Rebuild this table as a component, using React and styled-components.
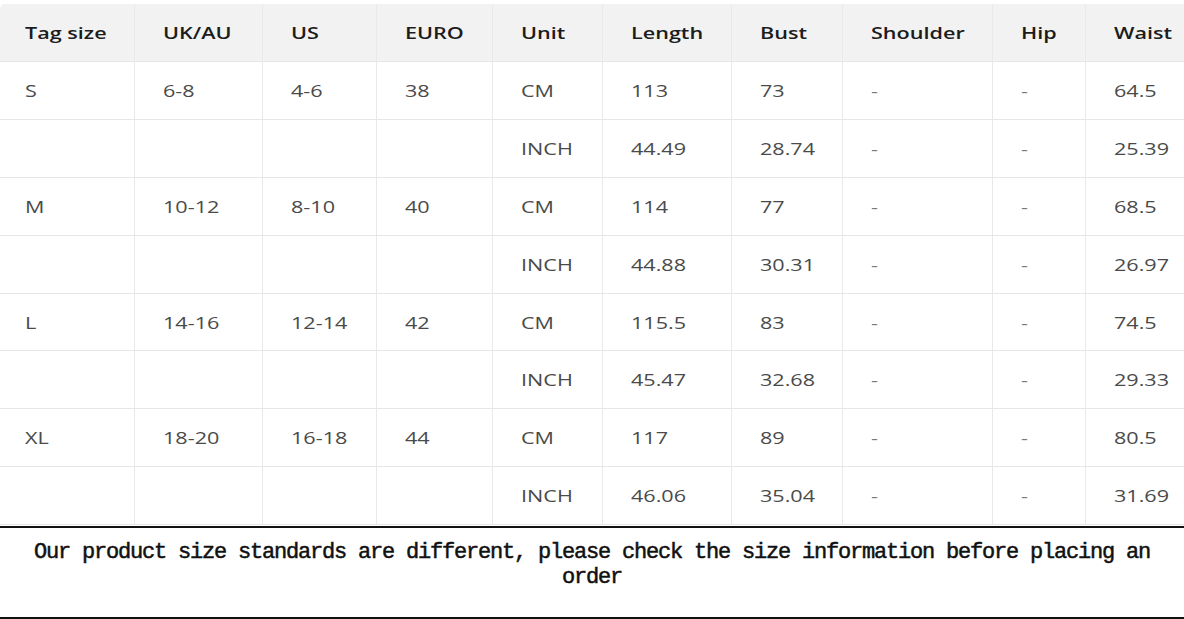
import React from 'react';
import styled, { createGlobalStyle } from 'styled-components';

const GlobalStyle = createGlobalStyle`
html, body {
  margin: 0;
  padding: 0;
  background: #ffffff;
  overflow: hidden;
}
`

const Page = styled.div`
width: 1184px;
height: 619px;
display: flex;
flex-direction: column;
padding-top: 4px;
box-sizing: border-box;
overflow: hidden;
`

const Table = styled.div`
display: grid;
grid-template-columns: 135px 128px 114px 116px 110px 129px 111px 150px 93px 130px;
grid-template-rows: 58px repeat(8, 57.9px);
width: 1216px;
border-top-left-radius: 5px;
overflow: hidden;
font-family: "Open Sans", "Noto Sans", sans-serif;
`

const Cell = styled.div`
display: flex;
align-items: center;
box-sizing: border-box;
padding-left: ${p => (p.$first ? '25px' : '28px')};
border-right: 1px solid #e9e9e9;
border-bottom: 1px solid #e6e6e6;
background: ${p => (p.$head ? '#f2f2f2' : '#ffffff')};
color: ${p => (p.$head ? '#1c1c1c' : p.$dash ? '#7a7a7a' : '#4a4a4a')};
font-size: 17px;
font-weight: ${p => (p.$head ? 600 : 400)};
white-space: nowrap;
`

const Label = styled.span`
display: inline-block;
transform: scaleX(1.27);
transform-origin: left center;
`

const Caption = styled.div`
height: 93px;
margin-top: 1px;
box-sizing: border-box;
border-top: 2px solid #111111;
border-bottom: 2px solid #111111;
padding: 12px 30px 0;
text-align: center;
font-family: "Liberation Mono", "DejaVu Sans Mono", monospace;
font-size: 22px;
font-weight: 400;
-webkit-text-stroke: 0.5px #111111;
letter-spacing: -1.2px;
line-height: 25px;
color: #111111;
`

const headers = ['Tag size', 'UK/AU', 'US', 'EURO', 'Unit', 'Length', 'Bust', 'Shoulder', 'Hip', 'Waist'];

const sizes = [
    { tag: 'S', uk: '6-8', us: '4-6', eu: '38', cm: ['113', '73', '64.5'], inch: ['44.49', '28.74', '25.39'] },
    { tag: 'M', uk: '10-12', us: '8-10', eu: '40', cm: ['114', '77', '68.5'], inch: ['44.88', '30.31', '26.97'] },
    { tag: 'L', uk: '14-16', us: '12-14', eu: '42', cm: ['115.5', '83', '74.5'], inch: ['45.47', '32.68', '29.33'] },
    { tag: 'XL', uk: '18-20', us: '16-18', eu: '44', cm: ['117', '89', '80.5'], inch: ['46.06', '35.04', '31.69'] },
];

function rowsFor(s) {
    return [
        [s.tag, s.uk, s.us, s.eu, 'CM', s.cm[0], s.cm[1], '-', '-', s.cm[2]],
        ['', '', '', '', 'INCH', s.inch[0], s.inch[1], '-', '-', s.inch[2]],
    ];
}

function App() {
    const rows = sizes.flatMap(rowsFor);

    return (
        <Page>
            <GlobalStyle />
            <Table>
                {headers.map((h, i) => (
                    <Cell key={h} $head $first={i === 0}>
                        <Label>{h}</Label>
                    </Cell>
                ))}
                {rows.map((row, r) =>
                    row.map((v, c) => (
                        <Cell key={r + '-' + c} $first={c === 0} $dash={v === '-'}>
                            <Label>{v}</Label>
                        </Cell>
                    ))
                )}
            </Table>
            <Caption>
                Our product size standards are different, please check the size information before placing an order
            </Caption>
        </Page>
    )
}

export default App;
